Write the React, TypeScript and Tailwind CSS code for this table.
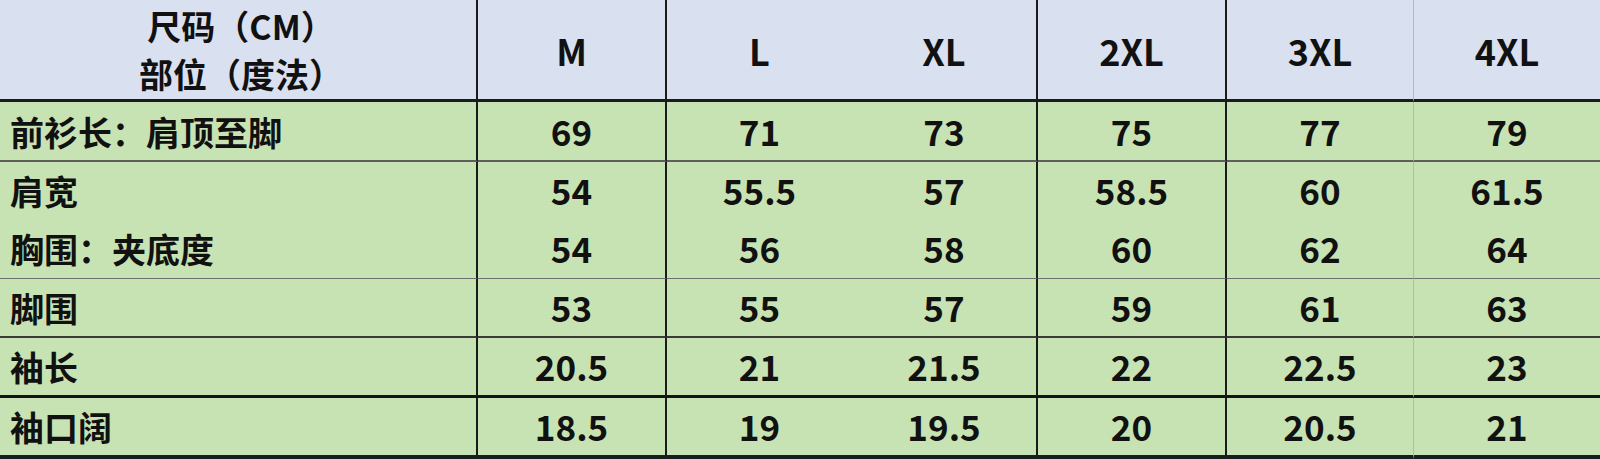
const SIZES = ["M", "L", "XL", "2XL", "3XL", "4XL"];

const ROWS = [
  { label: "前衫长：肩顶至脚", values: ["69", "71", "73", "75", "77", "79"] },
  { label: "肩宽", values: ["54", "55.5", "57", "58.5", "60", "61.5"] },
  { label: "胸围：夹底度", values: ["54", "56", "58", "60", "62", "64"] },
  { label: "脚围", values: ["53", "55", "57", "59", "61", "63"] },
  { label: "袖长", values: ["20.5", "21", "21.5", "22", "22.5", "23"] },
  { label: "袖口阔", values: ["18.5", "19", "19.5", "20", "20.5", "21"] },
];

// right border for each column (label column first)
const COL_BORDERS = [
  "border-r-2 border-r-[#1b1b1b]",
  "border-r-2 border-r-[#1b1b1b]",
  "",
  "border-r-2 border-r-[#1b1b1b]",
  "border-r-2 border-r-[#1b1b1b]",
  "border-r border-r-[#aebfa2]",
  "",
];

// bottom border for each body row
const ROW_BORDERS = [
  "border-b-2 border-b-[#5e5e5e]",
  "",
  "border-b border-b-[#6f6f6f]",
  "border-b-2 border-b-[#3a3a3a]",
  "border-b-[3px] border-b-[#141414]",
  "border-b-4 border-b-[#1a1d1f]",
];

const font = "font-['Noto_Sans_CJK_SC','Noto_Sans',sans-serif]";

const App = () => {
  return (
    <div className={`w-[1600px] h-[459px] overflow-hidden bg-[#c8e3b3] text-[#111] font-bold ${font}`}>
      <div className="grid grid-cols-[478px_189px_185px_186px_189px_187px_186px] grid-rows-[102px_60px_57px_60px_59px_60px_61px]">
        <div className={`bg-[#d9e0f0] border-b-[3px] border-b-[#1b1b1b] ${COL_BORDERS[0]} flex flex-col items-center justify-center text-[34px] leading-[48px] pl-[6px]`}>
          <span>尺码（CM）</span>
          <span>部位（度法）</span>
        </div>
        {SIZES.map((s, i) => (
          <div
            key={s}
            className={`bg-[#d9e0f0] border-b-[3px] border-b-[#1b1b1b] ${COL_BORDERS[i + 1]} flex items-center justify-center text-[36px] pt-[1px]`}
          >
            {s}
          </div>
        ))}
        {ROWS.map((row, r) => (
          <div key={row.label} className="contents">
            <div className={`${ROW_BORDERS[r]} ${COL_BORDERS[0]} flex items-center pl-[10px] text-[34px]`}>
              {row.label}
            </div>
            {row.values.map((v, i) => (
              <div
                key={i}
                className={`${ROW_BORDERS[r]} ${COL_BORDERS[i + 1]} flex items-center justify-center text-[35px]`}
              >
                {v}
              </div>
            ))}
          </div>
        ))}
      </div>
    </div>
  );
};

export default App;
